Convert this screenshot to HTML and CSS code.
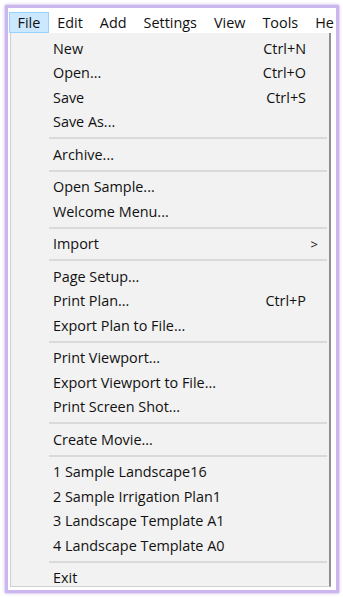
FILE: index.html
```html
<!DOCTYPE html>
<html>
<head>
<meta charset="utf-8">
<link rel="stylesheet" href="styles.css">
</head>
<body>
<div class="frame">
  <div class="menubar">
    <span class="top active">File</span>
    <span class="top">Edit</span>
    <span class="top">Add</span>
    <span class="top">Settings</span>
    <span class="top">View</span>
    <span class="top">Tools</span>
    <span class="top">Help</span>
  </div>
  <div class="panel">
    <div class="item"><span>New</span><span class="key">Ctrl+N</span></div>
    <div class="item"><span>Open...</span><span class="key">Ctrl+O</span></div>
    <div class="item"><span>Save</span><span class="key">Ctrl+S</span></div>
    <div class="item"><span>Save As...</span></div>
    <div class="sep"></div>
    <div class="item"><span>Archive...</span></div>
    <div class="sep"></div>
    <div class="item"><span>Open Sample...</span></div>
    <div class="item"><span>Welcome Menu...</span></div>
    <div class="sep"></div>
    <div class="item"><span>Import</span><span class="arrow">&gt;</span></div>
    <div class="sep"></div>
    <div class="item"><span>Page Setup...</span></div>
    <div class="item"><span>Print Plan...</span><span class="key">Ctrl+P</span></div>
    <div class="item"><span>Export Plan to File...</span></div>
    <div class="sep"></div>
    <div class="item"><span>Print Viewport...</span></div>
    <div class="item"><span>Export Viewport to File...</span></div>
    <div class="item"><span>Print Screen Shot...</span></div>
    <div class="sep"></div>
    <div class="item"><span>Create Movie...</span></div>
    <div class="sep"></div>
    <div class="item"><span>1 Sample Landscape16</span></div>
    <div class="item"><span>2 Sample Irrigation Plan1</span></div>
    <div class="item"><span>3 Landscape Template A1</span></div>
    <div class="item"><span>4 Landscape Template A0</span></div>
    <div class="sep"></div>
    <div class="item"><span>Exit</span></div>
  </div>
</div>
</body>
</html>
```
FILE: styles.css
```css
html, body {
  margin: 0;
  padding: 0;
  background: #ffffff;
}
body {
  font-family: "Open Sans", "Noto Sans", sans-serif;
  font-size: 14.4px;
  color: #111111;
}
.frame {
  margin: 5px 4px 4px 5px;
  height: 582px;
  border: 3px solid #cbb6ee;
  box-shadow: 0 0 3px #b79fe4;
  background: #ffffff;
  overflow: hidden;
  display: flex;
  flex-direction: column;
}
.menubar {
  height: 25px;
  display: flex;
  align-items: flex-end;
  padding-left: 1px;
  white-space: nowrap;
  overflow: hidden;
  width: 325px;
}
.top {
  height: 21px;
  line-height: 19px;
  padding: 0 7.5px;
  border: 1px solid transparent;
  box-sizing: border-box;
  flex: none;
}
.top.active {
  background: #cce8ff;
  border-color: #99d1ff;
}
.panel {
  margin-left: 2px;
  width: 321px;
  height: 554px;
  box-sizing: border-box;
  background: #f2f2f2;
  border-left: 1px solid #d0d0d0;
  border-right: 2px solid #8f8f8f;
  border-bottom: 1px solid #d0d0d0;
  padding-top: 3px;
  display: flex;
  flex-direction: column;
  overflow: hidden;
}
.item {
  flex: none;
  height: 24.5px;
  display: flex;
  align-items: center;
  justify-content: space-between;
  padding-left: 42px;
  padding-right: 23px;
  white-space: nowrap;
}
.key {
  text-align: right;
}
.arrow {
  margin-right: -12px;
  font-size: 13px;
}
.sep {
  flex: none;
  height: 8px;
  display: flex;
  align-items: center;
  padding-left: 38px;
  padding-right: 2px;
}
.sep::after {
  content: "";
  display: block;
  width: 100%;
  height: 2px;
  background: #dadada;
}
```
